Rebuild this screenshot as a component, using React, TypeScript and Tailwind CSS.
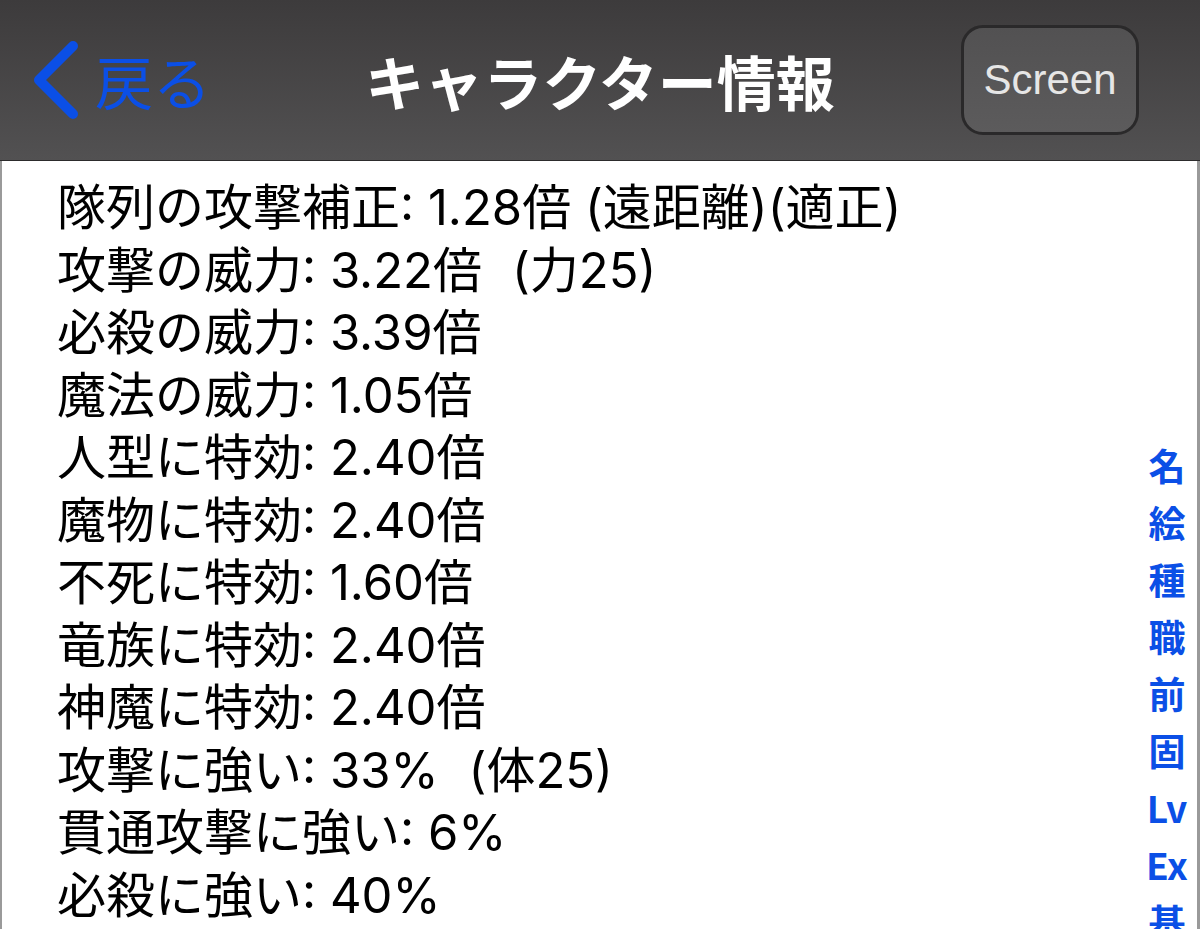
import React from "react";

const lines: { main: string; extra?: string }[] = [
  { main: "隊列の攻撃補正: 1.28倍 (遠距離)(適正)" },
  { main: "攻撃の威力: 3.22倍", extra: "(力25)" },
  { main: "必殺の威力: 3.39倍" },
  { main: "魔法の威力: 1.05倍" },
  { main: "人型に特効: 2.40倍" },
  { main: "魔物に特効: 2.40倍" },
  { main: "不死に特効: 1.60倍" },
  { main: "竜族に特効: 2.40倍" },
  { main: "神魔に特効: 2.40倍" },
  { main: "攻撃に強い: 33%", extra: "(体25)" },
  { main: "貫通攻撃に強い: 6%" },
  { main: "必殺に強い: 40%" },
];

const index = ["名", "絵", "種", "職", "前", "固", "Lv", "Ex", "基"];

const jp = "font-['Noto_Sans_CJK_JP',sans-serif]";
const body = "font-['Inter','Noto_Sans_CJK_JP',sans-serif]";

export default function App() {
  return (
    <div className={`w-full h-[929px] overflow-hidden flex flex-col bg-white ${jp}`}>
      <header className="h-[161px] shrink-0 grid grid-cols-[1fr_auto_1fr] items-center bg-gradient-to-b from-[#3d3b3c] to-[#525152] border-b border-[#2c2b2c] px-[33px]">
        <div className="flex items-center">
          <svg width="48" height="80" viewBox="0 0 48 80" className="shrink-0">
            <path d="M40 6 L6 40 L40 74" fill="none" stroke="#0b4fe6" strokeWidth="10" strokeLinecap="round" strokeLinejoin="round" />
          </svg>
          <span className="ml-[14px] text-[58px] leading-none text-[#0b4fe6]">戻る</span>
        </div>
        <h1 className="text-[59px] font-bold text-white leading-none">キャラクター情報</h1>
        <div className="flex justify-end pr-[28px]">
          <button className="w-[178px] h-[110px] rounded-[22px] border-[3px] border-[#2a292a] bg-gradient-to-b from-[#525152] to-[#5c5b5c] text-[#e6e6e6] text-[42px] font-['Liberation_Sans',sans-serif] leading-none">
            Screen
          </button>
        </div>
      </header>
      <main className={`relative flex-1 border-l-2 border-r-[3px] border-[#9a9a9a] pl-[55px] pt-[16px] ${body}`}>
        {lines.map((l, i) => (
          <div key={i} className="text-[49px] leading-[62.5px] text-black whitespace-pre">
            {l.main}
            {l.extra && <span className="ml-[30px]">{l.extra}</span>}
          </div>
        ))}
        <nav className={`absolute right-0 top-[276px] w-[60px] flex flex-col items-center ${jp}`}>
          {index.map((c) => (
            <span key={c} className="text-[37px] font-bold leading-[57px] text-[#0b4fe6]">
              {c}
            </span>
          ))}
        </nav>
      </main>
    </div>
  );
}
